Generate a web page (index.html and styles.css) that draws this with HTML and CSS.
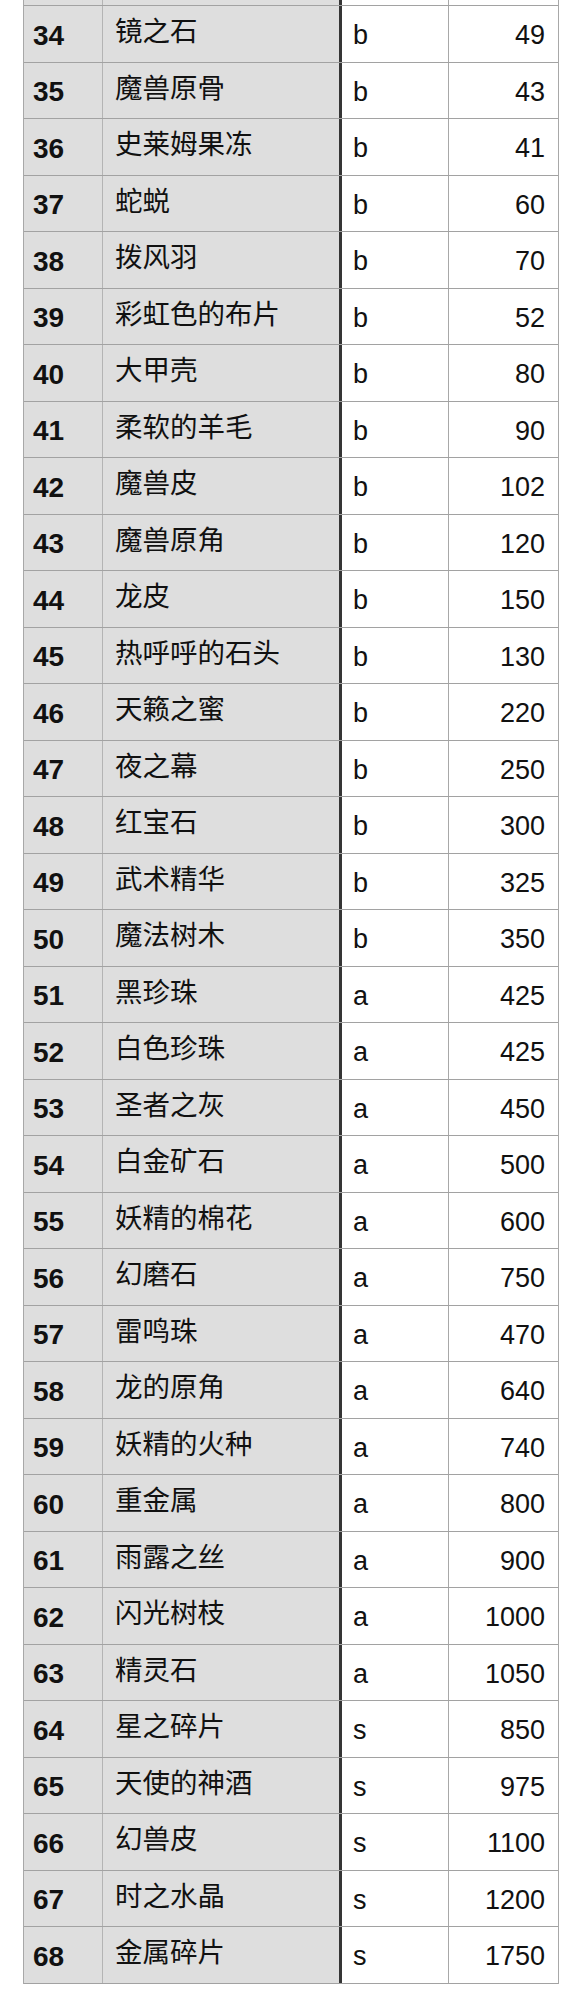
FILE: index.html
```html
<!DOCTYPE html>
<html lang="zh">
<head>
<meta charset="utf-8">
<link rel="stylesheet" href="styles.css">
</head>
<body>
<div class="sheet">
  <div class="row top"><div class="c id"></div><div class="c name"></div><div class="c rank"></div><div class="c price"></div></div>
  <div class="row"><div class="c id">34</div><div class="c name">镜之石</div><div class="c rank">b</div><div class="c price">49</div></div>
  <div class="row"><div class="c id">35</div><div class="c name">魔兽原骨</div><div class="c rank">b</div><div class="c price">43</div></div>
  <div class="row"><div class="c id">36</div><div class="c name">史莱姆果冻</div><div class="c rank">b</div><div class="c price">41</div></div>
  <div class="row"><div class="c id">37</div><div class="c name">蛇蜕</div><div class="c rank">b</div><div class="c price">60</div></div>
  <div class="row"><div class="c id">38</div><div class="c name">拨风羽</div><div class="c rank">b</div><div class="c price">70</div></div>
  <div class="row"><div class="c id">39</div><div class="c name">彩虹色的布片</div><div class="c rank">b</div><div class="c price">52</div></div>
  <div class="row"><div class="c id">40</div><div class="c name">大甲壳</div><div class="c rank">b</div><div class="c price">80</div></div>
  <div class="row"><div class="c id">41</div><div class="c name">柔软的羊毛</div><div class="c rank">b</div><div class="c price">90</div></div>
  <div class="row"><div class="c id">42</div><div class="c name">魔兽皮</div><div class="c rank">b</div><div class="c price">102</div></div>
  <div class="row"><div class="c id">43</div><div class="c name">魔兽原角</div><div class="c rank">b</div><div class="c price">120</div></div>
  <div class="row"><div class="c id">44</div><div class="c name">龙皮</div><div class="c rank">b</div><div class="c price">150</div></div>
  <div class="row"><div class="c id">45</div><div class="c name">热呼呼的石头</div><div class="c rank">b</div><div class="c price">130</div></div>
  <div class="row"><div class="c id">46</div><div class="c name">天籁之蜜</div><div class="c rank">b</div><div class="c price">220</div></div>
  <div class="row"><div class="c id">47</div><div class="c name">夜之幕</div><div class="c rank">b</div><div class="c price">250</div></div>
  <div class="row"><div class="c id">48</div><div class="c name">红宝石</div><div class="c rank">b</div><div class="c price">300</div></div>
  <div class="row"><div class="c id">49</div><div class="c name">武术精华</div><div class="c rank">b</div><div class="c price">325</div></div>
  <div class="row"><div class="c id">50</div><div class="c name">魔法树木</div><div class="c rank">b</div><div class="c price">350</div></div>
  <div class="row"><div class="c id">51</div><div class="c name">黑珍珠</div><div class="c rank">a</div><div class="c price">425</div></div>
  <div class="row"><div class="c id">52</div><div class="c name">白色珍珠</div><div class="c rank">a</div><div class="c price">425</div></div>
  <div class="row"><div class="c id">53</div><div class="c name">圣者之灰</div><div class="c rank">a</div><div class="c price">450</div></div>
  <div class="row"><div class="c id">54</div><div class="c name">白金矿石</div><div class="c rank">a</div><div class="c price">500</div></div>
  <div class="row"><div class="c id">55</div><div class="c name">妖精的棉花</div><div class="c rank">a</div><div class="c price">600</div></div>
  <div class="row"><div class="c id">56</div><div class="c name">幻磨石</div><div class="c rank">a</div><div class="c price">750</div></div>
  <div class="row"><div class="c id">57</div><div class="c name">雷鸣珠</div><div class="c rank">a</div><div class="c price">470</div></div>
  <div class="row"><div class="c id">58</div><div class="c name">龙的原角</div><div class="c rank">a</div><div class="c price">640</div></div>
  <div class="row"><div class="c id">59</div><div class="c name">妖精的火种</div><div class="c rank">a</div><div class="c price">740</div></div>
  <div class="row"><div class="c id">60</div><div class="c name">重金属</div><div class="c rank">a</div><div class="c price">800</div></div>
  <div class="row"><div class="c id">61</div><div class="c name">雨露之丝</div><div class="c rank">a</div><div class="c price">900</div></div>
  <div class="row"><div class="c id">62</div><div class="c name">闪光树枝</div><div class="c rank">a</div><div class="c price">1000</div></div>
  <div class="row"><div class="c id">63</div><div class="c name">精灵石</div><div class="c rank">a</div><div class="c price">1050</div></div>
  <div class="row"><div class="c id">64</div><div class="c name">星之碎片</div><div class="c rank">s</div><div class="c price">850</div></div>
  <div class="row"><div class="c id">65</div><div class="c name">天使的神酒</div><div class="c rank">s</div><div class="c price">975</div></div>
  <div class="row"><div class="c id">66</div><div class="c name">幻兽皮</div><div class="c rank">s</div><div class="c price">1100</div></div>
  <div class="row"><div class="c id">67</div><div class="c name">时之水晶</div><div class="c rank">s</div><div class="c price">1200</div></div>
  <div class="row"><div class="c id">68</div><div class="c name">金属碎片</div><div class="c rank">s</div><div class="c price">1750</div></div>
</div>
</body>
</html>
```
FILE: styles.css
```css
html, body {
  margin: 0;
  padding: 0;
  background: #ffffff;
}
body {
  font-family: "Liberation Sans", Arial, "Noto Sans CJK SC", sans-serif;
  color: #111111;
}
.sheet {
  margin-left: 23px;
  width: 536px;
  border-left: 1px solid #a8a8a8;
  border-right: 1px solid #a8a8a8;
  box-sizing: border-box;
}
.row {
  display: grid;
  grid-template-columns: 79px 239px 107px 1fr;
  height: 56.5px;
  box-sizing: border-box;
  border-bottom: 1px solid #a2a2a2;
}
.row.top {
  height: 6px;
}
.c {
  display: flex;
  align-items: center;
  box-sizing: border-box;
  white-space: nowrap;
}
.id {
  background: #dedede;
  border-right: 1px solid #b4b4b4;
  padding-left: 9px;
  padding-top: 4px;
  font-weight: bold;
  font-size: 28px;
}
.name {
  background: #dedede;
  border-right: 3px solid #353535;
  padding-left: 12px;
  padding-bottom: 9px;
  font-family: "Noto Sans CJK SC", sans-serif;
  font-size: 27.5px;
}
.rank {
  border-right: 1px solid #a8a8a8;
  padding-left: 11px;
  padding-top: 4px;
  font-size: 27px;
}
.price {
  justify-content: flex-end;
  padding-right: 13px;
  padding-top: 4px;
  font-size: 27px;
}
.top .c {
  padding: 0;
}
```
